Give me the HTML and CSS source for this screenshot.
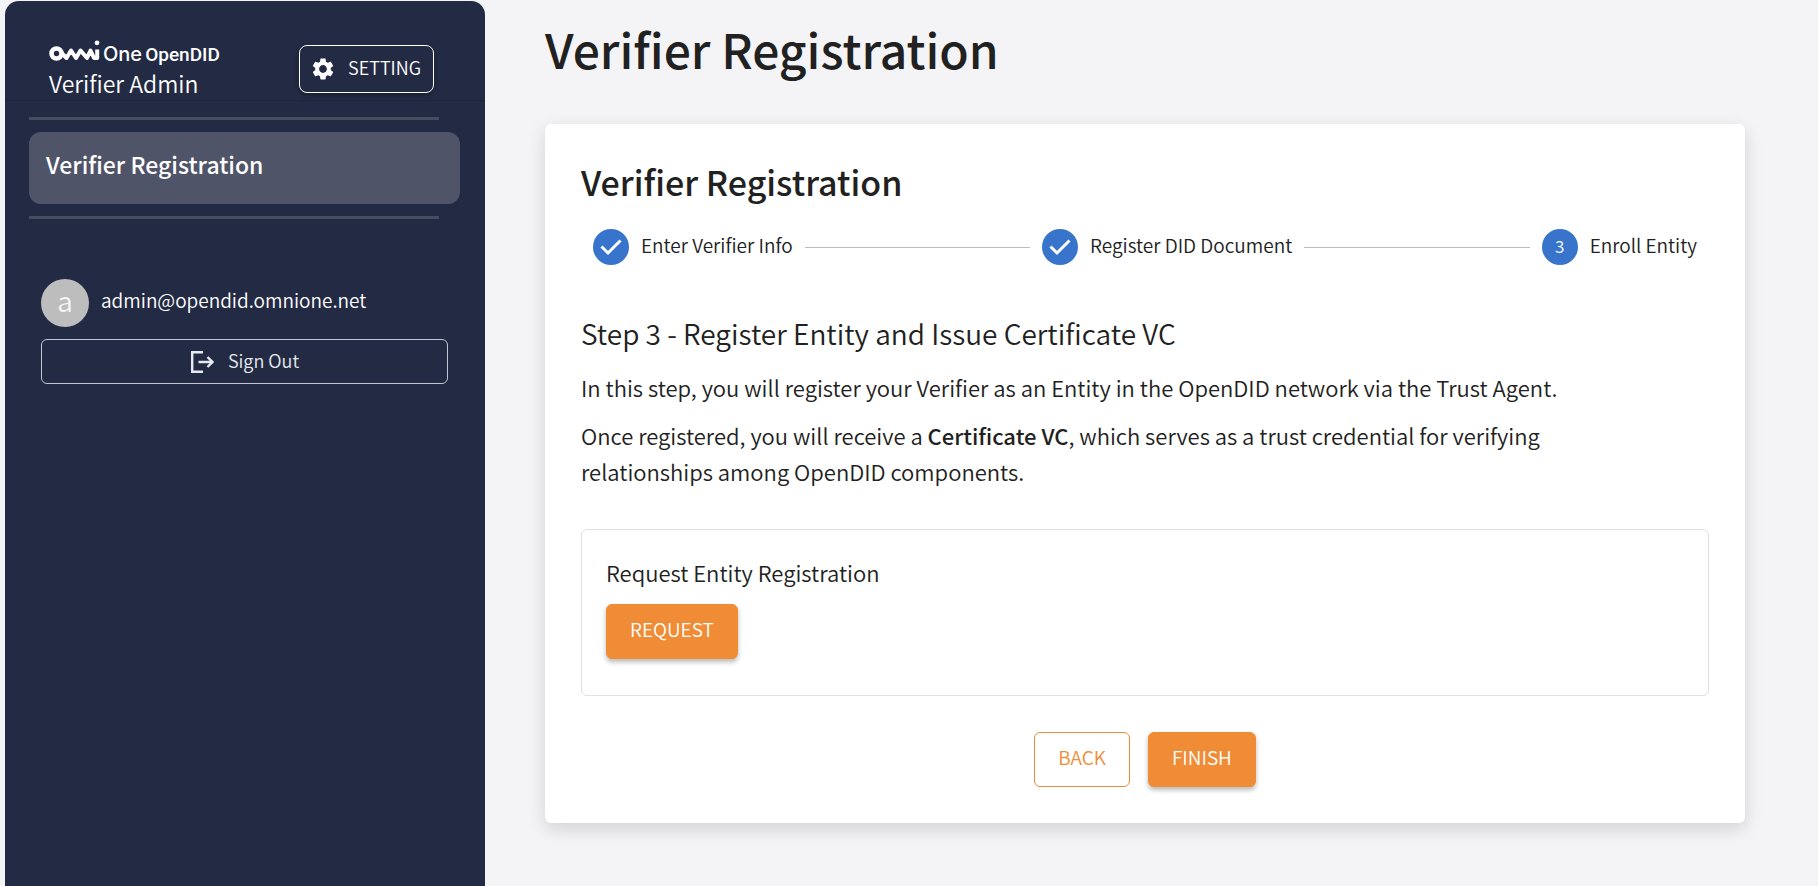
FILE: index.html
```html
<!DOCTYPE html>
<html lang="en">
<head>
<meta charset="utf-8">
<meta name="viewport" content="width=device-width, initial-scale=1">
<title>Verifier Registration</title>
<link rel="stylesheet" href="styles.css">
</head>
<body>
<div class="app">
  <aside class="sidebar">
    <header class="brand">
      <div class="brand-name">
        <div class="logo">
          <svg class="logo-mark" viewBox="0 0 51 21" aria-hidden="true">
            <circle cx="7.500" cy="13.500" r="5" fill="none" stroke="#fff" stroke-width="4.600"/>
            <path d="M12 12.500 L17.500 18 L22 10.500 L27 18 L31.500 10.500 L38 18 L41.500 10.500 L45 18 L48.200 18 V9.500" fill="none" stroke="#fff" stroke-width="4" stroke-linejoin="round"/>
            <circle cx="48" cy="2.800" r="2.400" fill="#fff"/>
          </svg>
          <span class="logo-one">One</span>
          <span class="logo-did">OpenDID</span>
        </div>
        <div class="brand-role">Verifier Admin</div>
      </div>
      <button class="setting" type="button">
        <svg viewBox="0 0 24 24" aria-hidden="true"><path fill="currentColor" d="M19.140 12.940c.04-.3.06-.61.06-.94 0-.32-.02-.64-.07-.94l2.030-1.580c.18-.14.23-.41.12-.61l-1.920-3.320c-.12-.22-.37-.29-.59-.22l-2.390.96c-.5-.38-1.030-.7-1.620-.94l-.36-2.540c-.04-.24-.24-.41-.48-.41h-3.840c-.24 0-.43.17-.47.41l-.36 2.540c-.59.24-1.130.57-1.620.94l-2.390-.96c-.22-.08-.47 0-.59.22L2.740 8.870c-.12.21-.08.47.12.61l2.030 1.580c-.05.3-.09.63-.09.94s.02.64.07.94l-2.030 1.580c-.18.14-.23.41-.12.61l1.920 3.320c.12.22.37.29.59.22l2.390-.96c.5.38 1.030.7 1.620.94l.36 2.540c.05.24.24.41.48.41h3.840c.24 0 .44-.17.47-.41l.36-2.540c.59-.24 1.130-.56 1.620-.94l2.390.96c.22.08.47 0 .59-.22l1.920-3.320c.12-.22.07-.47-.12-.61zM12 15.600c-1.980 0-3.600-1.620-3.600-3.600s1.620-3.600 3.600-3.600 3.600 1.620 3.600 3.600-1.620 3.600-3.600 3.600"/></svg>
        <span class="label">SETTING</span>
      </button>
    </header>
    <nav class="menu">
      <a class="menu-item" href="#registration" aria-current="page">Verifier Registration</a>
    </nav>
    <section class="account">
      <div class="account-user">
        <span class="avatar">a</span>
        <span class="label account-mail">admin@opendid.omnione.net</span>
      </div>
      <button class="sign-out" type="button">
        <svg viewBox="0 0 24 24" fill="none" stroke="currentColor" stroke-width="2.400" aria-hidden="true"><path d="M13 2.200H2.200V21.800H13M8.500 12H22.500M17.500 7L22.500 12L17.500 17"/></svg>
        <span class="label">Sign Out</span>
      </button>
    </section>
  </aside>

  <main class="content">
    <h1 class="page-title">Verifier Registration</h1>
    <section class="card" id="registration">
      <h2 class="card-title">Verifier Registration</h2>
      <ol class="stepper">
        <li class="step">
          <svg class="step-icon" viewBox="0 0 36 36" aria-hidden="true"><circle cx="18" cy="18" r="18" fill="#3874cb"/><path d="M8.500 17.500L15 24L27.500 11.500" fill="none" stroke="#fff" stroke-width="3"/></svg>
          <span class="label">Enter Verifier Info</span>
        </li>
        <li class="step-line" aria-hidden="true"></li>
        <li class="step">
          <svg class="step-icon" viewBox="0 0 36 36" aria-hidden="true"><circle cx="18" cy="18" r="18" fill="#3874cb"/><path d="M8.500 17.500L15 24L27.500 11.500" fill="none" stroke="#fff" stroke-width="3"/></svg>
          <span class="label">Register DID Document</span>
        </li>
        <li class="step-line" aria-hidden="true"></li>
        <li class="step" aria-current="step">
          <span class="step-icon step-number">3</span>
          <span class="label">Enroll Entity</span>
        </li>
      </ol>
      <h3 class="step-title">Step 3 - Register Entity and Issue Certificate VC</h3>
      <p class="text">In this step, you will register your Verifier as an Entity in the OpenDID network via the Trust Agent.</p>
      <p class="text">Once registered, you will receive a <strong>Certificate VC</strong>, which serves as a trust credential for verifying<br>relationships among OpenDID components.</p>
      <div class="request">
        <p class="request-label">Request Entity Registration</p>
        <button class="button" type="button">REQUEST</button>
      </div>
      <div class="actions">
        <button class="button button-outlined" type="button">BACK</button>
        <button class="button" type="button">FINISH</button>
      </div>
    </section>
  </main>
</div>
</body>
</html>
```
FILE: styles.css
```css
* {
  box-sizing: border-box;
}

body {
  margin: 0;
  background: #f4f4f7;
  color: #212121;
  font-family: "Noto Sans CJK KR", "Noto Sans", sans-serif;
  font-size: 22px;
  font-weight: 350;
}

h1, h2, h3, p, ol {
  margin: 0;
  padding: 0;
}

button {
  font-family: inherit;
  font-weight: inherit;
  cursor: pointer;
}

.label {
  padding-bottom: 4px;
}

.app {
  display: flex;
  min-height: 100vh;
  padding: 1px 0 0 5px;
}

.sidebar {
  flex: 0 0 480px;
  background: #232a43;
  border-radius: 14px 14px 0 0;
  color: #fff;
}

.brand {
  display: flex;
  justify-content: space-between;
  align-items: flex-end;
  padding: 38px 51px 0 44px;
  border-bottom: 1px solid #1f263b;
}

.brand-name {
  padding-bottom: 1px;
}

.logo {
  display: flex;
  align-items: baseline;
  height: 28px;
  line-height: 30px;
}

.logo-mark {
  width: 51px;
  height: 21px;
  margin-right: 3px;
}

.logo-one {
  margin-right: 3px;
  font-family: Inter, sans-serif;
  font-size: 20px;
  font-weight: 500;
}

.logo-did {
  font-family: Roboto, sans-serif;
  font-size: 19px;
  font-weight: 500;
}

.brand-role {
  font-size: 23px;
  line-height: 32px;
}

.setting {
  display: flex;
  align-items: center;
  gap: 12px;
  height: 48px;
  margin-bottom: 7px;
  padding: 0 12px 0 10px;
  background: transparent;
  border: 1px solid #fff;
  border-radius: 8px;
  box-shadow: 0 2px 4px rgba(0, 0, 0, 0.3);
  color: #fff;
  font-size: 18px;
}

.setting svg {
  width: 26px;
  height: 26px;
}

.menu {
  display: flex;
  flex-direction: column;
  gap: 12px;
  padding: 16px 25px 0 24px;
}

.menu::before,
.menu::after {
  content: "";
  width: 410px;
  height: 3px;
  background: #474b5e;
}

.menu-item {
  padding: 14px 17px 22px;
  background: #505468;
  border-radius: 12px;
  color: #fff;
  font-size: 23px;
  font-weight: 500;
  line-height: 36px;
  text-decoration: none;
}

.account {
  display: flex;
  flex-direction: column;
  gap: 12px;
  padding: 60px 37px 0 36px;
}

.account-user {
  display: flex;
  align-items: center;
  gap: 12px;
}

.avatar {
  width: 48px;
  height: 48px;
  background: #bdbdbd;
  border-radius: 50%;
  color: #f4f4f7;
  font-size: 28px;
  line-height: 42px;
  text-align: center;
}

.account-mail {
  padding-bottom: 8px;
  font-size: 19px;
}

.sign-out {
  display: flex;
  align-items: center;
  justify-content: center;
  gap: 14px;
  height: 45px;
  background: transparent;
  border: 1px solid #c3c6d2;
  border-radius: 6px;
  color: #e8eaf0;
  font-size: 18px;
}

.sign-out svg {
  width: 24px;
  height: 24px;
}

.content {
  flex: 1;
  padding: 11px 73px 36px 60px;
}

.page-title {
  font-size: 48px;
  font-weight: 500;
  line-height: 72px;
}

.card {
  margin-top: 40px;
  padding: 34px 36px 36px;
  background: #fff;
  border-radius: 6px;
  box-shadow: 0 6px 18px rgba(0, 0, 0, 0.14);
}

.card-title {
  font-size: 34px;
  font-weight: 500;
  line-height: 48px;
}

.stepper {
  display: flex;
  align-items: center;
  gap: 12px;
  margin-top: 23px;
  padding: 0 12px;
  list-style: none;
}

.step {
  display: flex;
  align-items: center;
  gap: 12px;
  height: 36px;
  font-size: 19px;
  line-height: 32px;
}

.step-icon {
  width: 36px;
  height: 36px;
}

.step-number {
  background: #3874cb;
  border-radius: 50%;
  color: #fff;
  font-size: 17px;
  line-height: 34px;
  text-align: center;
}

.step-line {
  flex: 1;
  height: 1px;
  background: #bdbdbd;
}

.step-title {
  margin-top: 46px;
  font-size: 28px;
  font-weight: inherit;
  line-height: 44px;
}

.text {
  margin-top: 12px;
  font-size: 22px;
  line-height: 36px;
}

.step-title + .text {
  margin-top: 14px;
}

.text strong {
  font-weight: 500;
}

.request {
  margin-top: 40px;
  padding: 24px 24px 36px;
  border: 1px solid #e0e0e0;
  border-radius: 6px;
}

.request-label {
  margin-bottom: 14px;
  line-height: 36px;
}

.button {
  height: 55px;
  padding: 0 23px 6px;
  background: #ef8c35;
  border: 1px solid #ef8c35;
  border-radius: 6px;
  box-shadow: 0 3px 5px rgba(0, 0, 0, 0.28);
  color: #fff;
  font-size: 19px;
  vertical-align: top;
}

.button-outlined {
  background: transparent;
  box-shadow: none;
  color: #ef8c35;
}

.actions {
  display: flex;
  justify-content: center;
  gap: 18px;
  margin-top: 36px;
}
```
